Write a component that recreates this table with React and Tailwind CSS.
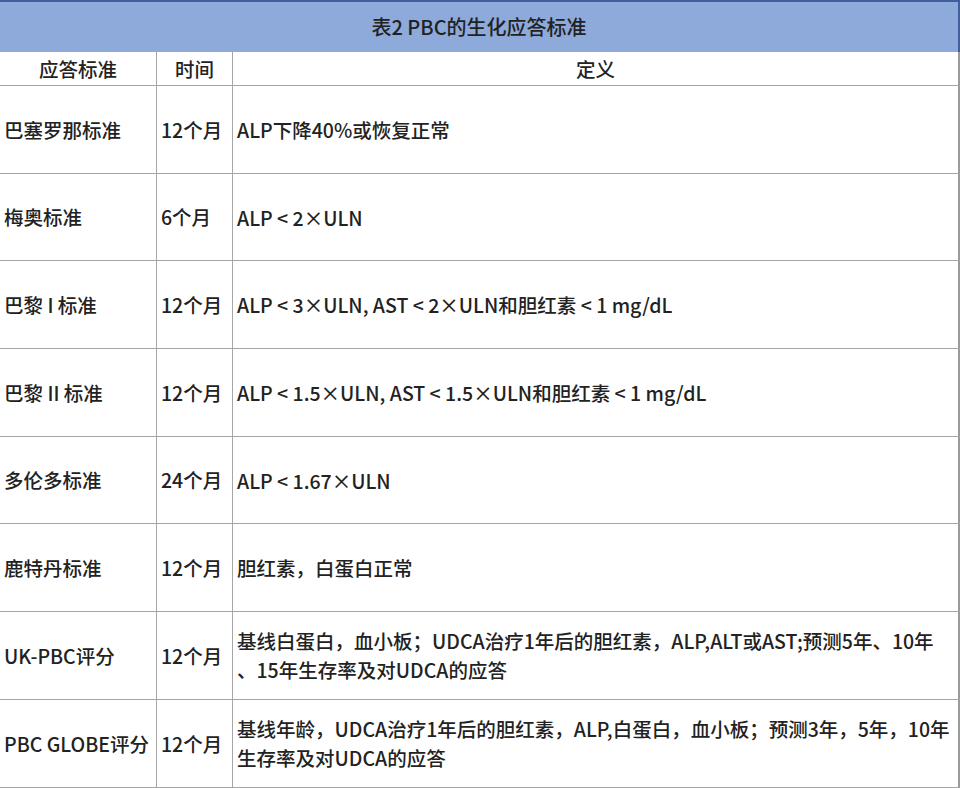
const rows = [
  { name: "巴塞罗那标准", time: "12个月", def: ["ALP下降40%或恢复正常"] },
  { name: "梅奥标准", time: "6个月", def: ["ALP < 2×ULN"] },
  { name: "巴黎 I 标准", time: "12个月", def: ["ALP < 3×ULN, AST < 2×ULN和胆红素 < 1 mg/dL"] },
  { name: "巴黎 II 标准", time: "12个月", def: ["ALP < 1.5×ULN, AST < 1.5×ULN和胆红素 < 1 mg/dL"] },
  { name: "多伦多标准", time: "24个月", def: ["ALP < 1.67×ULN"] },
  { name: "鹿特丹标准", time: "12个月", def: ["胆红素，白蛋白正常"] },
  {
    name: "UK-PBC评分",
    time: "12个月",
    def: ["基线白蛋白，血小板；UDCA治疗1年后的胆红素，ALP,ALT或AST;预测5年、10年", "、15年生存率及对UDCA的应答"],
  },
  {
    name: "PBC GLOBE评分",
    time: "12个月",
    def: ["基线年龄，UDCA治疗1年后的胆红素，ALP,白蛋白，血小板；预测3年，5年，10年", "生存率及对UDCA的应答"],
  },
];

function App() {
  return (
    <div
      className="h-[788px] w-[960px] overflow-hidden bg-white text-[#222] text-[19.5px] font-medium"
      style={{ fontFamily: '"Noto Sans CJK SC", "Noto Sans", sans-serif' }}
    >
      <div className="flex h-[52px] items-center justify-center border-t-2 border-r-2 border-[#3f5f9f] bg-[#8eaadb] text-[20px]">
        表2 PBC的生化应答标准
      </div>

      <div className="grid h-[34px] grid-cols-[157px_76px_1fr] border-b border-r-2 border-[#a6a6a6] border-r-[#9a9a9a]">
        <div className="flex items-center justify-center border-r border-[#a6a6a6]">应答标准</div>
        <div className="flex items-center justify-center border-r border-[#a6a6a6]">时间</div>
        <div className="flex items-center justify-center">定义</div>
      </div>

      {rows.map((row) => (
        <div
          key={row.name}
          className="grid h-[87.7px] grid-cols-[157px_76px_1fr] border-b border-r-2 border-[#a6a6a6] border-r-[#9a9a9a]"
        >
          <div className="flex items-center whitespace-nowrap border-r border-[#a6a6a6] pl-[4px]">{row.name}</div>
          <div className="flex items-center whitespace-nowrap border-r border-[#a6a6a6] pl-[4px]">{row.time}</div>
          <div className="flex flex-col justify-center whitespace-nowrap pl-[4px] leading-[29px]">
            {row.def.map((line) => (
              <span key={line}>{line}</span>
            ))}
          </div>
        </div>
      ))}
    </div>
  );
}

export default App;
